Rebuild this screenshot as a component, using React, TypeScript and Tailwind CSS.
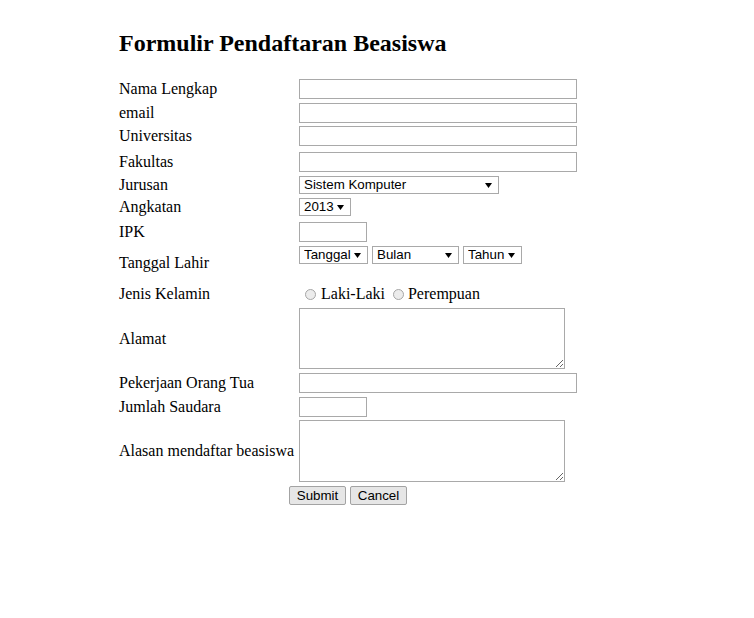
import React from "react";

const inputCls =
  "h-[20px] border border-[#a9a9a9] bg-white px-[2px] text-[13.33px] font-['Liberation_Sans',Arial,sans-serif] text-black outline-none";

function Row({
  label,
  className,
  children,
}: {
  label: string;
  className: string;
  children: React.ReactNode;
}) {
  return (
    <div className={`flex items-center ${className}`}>
      <div className="w-[183px] shrink-0 pl-[3px] leading-[18px]">{label}</div>
      {children}
    </div>
  );
}

function Sel({ label, className }: { label: string; className: string }) {
  return (
    <div className={`relative h-[18px] ${className}`}>
      <select className="block h-[18px] w-full appearance-none border border-[#a9a9a9] bg-white pl-[4px] text-[13.33px] leading-[16px] font-['Liberation_Sans',Arial,sans-serif] text-black outline-none">
        <option>{label}</option>
      </select>
      <svg
        className="pointer-events-none absolute right-[7px] top-[7px]"
        width="7"
        height="5"
        viewBox="0 0 7 5"
      >
        <path d="M0 0H7L3.5 5Z" fill="#000" />
      </svg>
    </div>
  );
}

export default function App() {
  return (
    <div className="min-h-[618px] w-[754px] bg-white text-[16px] text-black font-['Liberation_Serif','Times_New_Roman',serif]">
      <div className="ml-[116px] w-[464px]">
        <h2 className="pt-[30px] pl-[3px] text-[24px] leading-[27px] font-bold">
          Formulir Pendaftaran Beasiswa
        </h2>

        <Row label="Nama Lengkap" className="mt-[22px] h-[20px]">
          <input className={`${inputCls} w-[278px]`} />
        </Row>
        <Row label="email" className="mt-[4px] h-[20px]">
          <input className={`${inputCls} w-[278px]`} />
        </Row>
        <Row label="Universitas" className="mt-[3px] h-[20px]">
          <input className={`${inputCls} w-[278px]`} />
        </Row>
        <Row label="Fakultas" className="mt-[6px] h-[20px]">
          <input className={`${inputCls} w-[278px]`} />
        </Row>
        <Row label="Jurusan" className="mt-[4px] h-[18px]">
          <Sel label="Sistem Komputer" className="w-[200px]" />
        </Row>
        <Row label="Angkatan" className="mt-[4px] h-[18px]">
          <Sel label="2013" className="w-[52px]" />
        </Row>
        <Row label="IPK" className="mt-[6px] h-[20px]">
          <input className={`${inputCls} w-[68px]`} />
        </Row>
        <Row label="Tanggal Lahir" className="mt-[4px] h-[34px]">
          <div className="flex gap-[4px] self-start">
            <Sel label="Tanggal" className="w-[69px]" />
            <Sel label="Bulan" className="w-[87px]" />
            <Sel label="Tahun" className="w-[59px]" />
          </div>
        </Row>
        <Row label="Jenis Kelamin" className="mt-[5px] h-[18px]">
          <div className="flex items-center leading-[18px]">
            <span className="ml-[6px] mr-[5px] inline-block h-[11px] w-[11px] rounded-full border border-[#a6a6a6] bg-[#ececec]" />
            <span>Laki-Laki</span>
            <span className="ml-[8px] mr-[4px] inline-block h-[11px] w-[11px] rounded-full border border-[#a6a6a6] bg-[#ececec]" />
            <span>Perempuan</span>
          </div>
        </Row>
        <Row label="Alamat" className="mt-[5px] h-[61px]">
          <textarea className="block h-[61px] w-[266px] resize border border-[#a9a9a9] bg-white text-[13.33px] outline-none" />
        </Row>
        <Row label="Pekerjaan Orang Tua" className="mt-[4px] h-[20px]">
          <input className={`${inputCls} w-[278px]`} />
        </Row>
        <Row label="Jumlah Saudara" className="mt-[4px] h-[20px]">
          <input className={`${inputCls} w-[68px]`} />
        </Row>
        <Row label="Alasan mendaftar beasiswa" className="mt-[3px] h-[62px]">
          <textarea className="block h-[62px] w-[266px] resize border border-[#a9a9a9] bg-white text-[13.33px] outline-none" />
        </Row>
        <div className="mt-[4px] flex justify-center gap-[4px]">
          <button className="h-[19px] w-[57px] rounded-[2px] border border-[#a3a3a3] bg-[#e6e6e6] text-[13.33px] leading-[17px] font-['Liberation_Sans',Arial,sans-serif] text-black">
            Submit
          </button>
          <button className="h-[19px] w-[57px] rounded-[2px] border border-[#a3a3a3] bg-[#e6e6e6] text-[13.33px] leading-[17px] font-['Liberation_Sans',Arial,sans-serif] text-black">
            Cancel
          </button>
        </div>
      </div>
    </div>
  );
}
